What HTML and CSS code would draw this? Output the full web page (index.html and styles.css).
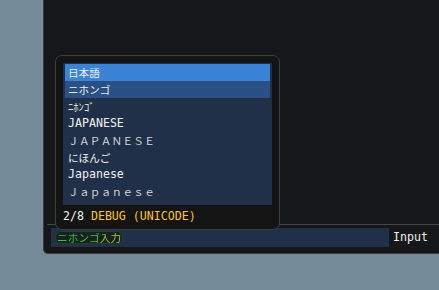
FILE: index.html
```html
<!DOCTYPE html>
<html lang="en">
<head>
  <meta charset="UTF-8">
  <meta name="viewport" content="width=device-width, initial-scale=1.0">
  <title>Unicode Input</title>
  <link rel="stylesheet" href="styles.css">
</head>
<body>
  <div class="window">
    <div class="separator"></div>
    <div class="input-row">
      <div class="input-frame">
        <span class="ime"><span class="ime-text">ニホンゴ入力</span></span>
      </div>
      <span class="input-label">Input</span>
    </div>

    <!-- candidate popup -->
    <div class="popup">
      <ul class="list">
        <li class="item selected jp">日本語</li>
        <li class="item hovered jp">ニホンゴ</li>
        <li class="item jp">ﾆﾎﾝｺﾞ</li>
        <li class="item">JAPANESE</li>
        <li class="item jp wide">ＪＡＰＡＮＥＳＥ</li>
        <li class="item jp">にほんご</li>
        <li class="item">Japanese</li>
        <li class="item jp wide">Ｊａｐａｎｅｓｅ</li>
      </ul>
      <div class="status">2/8 <span class="debug">DEBUG (UNICODE)</span></div>
    </div>
  </div>
</body>
</html>
```
FILE: styles.css
```css
body {
  margin: 0;
  padding: 0;
  background-color: #758a98;
  font-family: "DejaVu Sans Mono", "Noto Sans CJK JP", monospace;
  font-size: 11.6px;
  color: #f0f0f0;
  overflow: hidden;
}
.window {
  position: relative;
  box-sizing: border-box;
  width: 396px;
  height: 254px;
  margin-left: 43px;
  padding: 0 0 6px 3px;
  background: #161719;
  border-left: 1px solid #3b3c40;
  border-bottom: 1px solid #3b3c40;
  border-bottom-left-radius: 5px;
  display: flex;
  flex-direction: column;
  justify-content: flex-end;
}
.separator {
  height: 1px;
  background: #43464d;
  margin-bottom: 3px;
}
.input-row {
  display: flex;
  align-items: center;
  gap: 4px;
  padding-left: 4px;
}
.input-frame {
  width: 338px;
  height: 19px;
  background: #203049;
  display: flex;
  align-items: center;
  padding-left: 4px;
  box-sizing: border-box;
}
.ime {
  background: #18231f;
  border: 1px solid #2a3a2c;
  border-radius: 6px;
  padding: 0 1px;
  line-height: 11px;
  height: 11px;
  display: flex;
  align-items: center;
}
.ime-text {
  font-family: "Noto Sans CJK JP", sans-serif;
  font-size: 10.7px;
  background: linear-gradient(90deg, #2fbf4a 0%, #49c43f 55%, #c4d43a 100%);
  -webkit-background-clip: text;
  background-clip: text;
  color: transparent;
}
.input-label {
  line-height: 17px;
}
.popup {
  position: absolute;
  left: 11px;
  top: 55px;
  box-sizing: border-box;
  width: 225px;
  height: 175px;
  padding: 7px 7px 0 7px;
  background: #141414;
  border: 1px solid #3d3e42;
  border-radius: 7px;
}
.list {
  list-style: none;
  margin: 0;
  padding: 1px 2px;
  height: 142px;
  box-sizing: border-box;
  background: #1f3048;
}
.item {
  height: 17px;
  line-height: 17px;
  padding-left: 3px;
  white-space: nowrap;
}
.item.jp {
  font-family: "Noto Sans CJK JP", sans-serif;
  font-size: 10.6px;
}
.item.wide { color: #d6d8dc; letter-spacing: 0.3px; }
.selected { background: #3b83d6; }
.hovered { background: #2a5185; }
.status {
  padding-top: 3px;
  line-height: 17px;
}
.debug { color: #ffc81e; }
```
